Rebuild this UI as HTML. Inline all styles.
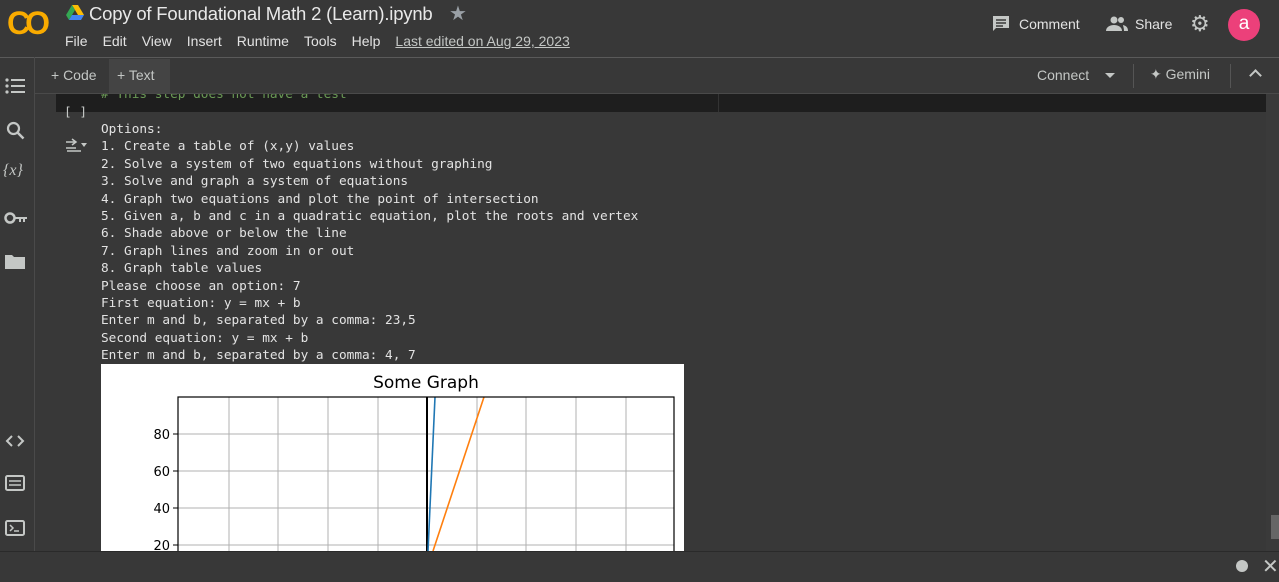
<!DOCTYPE html><html><head><style>
body{margin:0;width:1279px;height:581px;background:#383838;font-family:"Liberation Sans",sans-serif;color:#e3e3e3;overflow:hidden;position:relative}
.a{position:absolute}
.menu span{margin-right:15px}
pre{margin:0;font-family:"DejaVu Sans Mono","Liberation Mono",monospace;font-size:12.75px;line-height:17.4px;color:#e3e3e3}
.ic{fill:#c4c7c5}
</style></head><body>
<div class="a" style="left:7px;top:5px;font:bold 32px 'Liberation Sans';color:#f9ab00;letter-spacing:-5px">CO</div>
<svg class="a" style="left:66px;top:5px" width="18" height="16" viewBox="0 0 18 16"><path d="M6 0h6l6 10h-6z" fill="#fbbc04"/><path d="M6 0L0 10l3 5 6-10z" fill="#34a853"/><path d="M3 15h12l3-5H6z" fill="#4285f4"/></svg>
<div class="a" style="left:89px;top:3px;font-size:18.5px;color:#e8e8e8;letter-spacing:-0.2px">Copy of Foundational Math 2 (Learn).ipynb</div>
<div class="a" style="left:449px;top:1px;font-size:20px;color:#9aa0a6">★</div>
<div class="a menu" style="left:65px;top:33px;font-size:14px"><span>File</span><span>Edit</span><span>View</span><span>Insert</span><span>Runtime</span><span>Tools</span><span>Help</span><span style="text-decoration:underline;color:#c4c7c5">Last edited on Aug 29, 2023</span></div>
<svg class="a" style="left:992px;top:15px" width="18" height="18" viewBox="0 0 18 18"><path d="M1 1h16v12H4l-3 3z" fill="#c4c7c5"/><path d="M4 5h10M4 8h10M4 11h7" stroke="#383838" stroke-width="1.4"/></svg>
<div class="a" style="left:1019px;top:16px;font-size:14px">Comment</div>
<svg class="a" style="left:1106px;top:16px" width="22" height="16" viewBox="0 0 22 16"><circle cx="8" cy="4" r="3.5" class="ic"/><path d="M0 15c0-4 4-6 8-6s8 2 8 6z" class="ic"/><circle cx="15" cy="4" r="3" class="ic"/><path d="M17 9c3 1 5 2 5 6h-4c0-3-1-5-1-6z" class="ic"/></svg>
<div class="a" style="left:1135px;top:16px;font-size:14px">Share</div>
<div class="a" style="left:1190px;top:11px;font-size:22px;color:#c4c7c5">⚙</div>
<div class="a" style="left:1228px;top:9px;width:32px;height:32px;border-radius:50%;background:#ec407a;color:#fff;font-size:19px;text-align:center;line-height:30px">a</div>
<div class="a" style="left:0;top:57px;width:1279px;height:1px;background:#5a5a5a"></div>
<div class="a" style="left:34px;top:57px;width:1px;height:494px;background:#4a4a4a"></div>
<div class="a" style="left:35px;top:93px;width:1244px;height:1px;background:#4a4a4a"></div>
<div class="a" style="left:51px;top:67px;font-size:14px;color:#c4c7c5">+ Code</div>
<div class="a" style="left:109px;top:59px;width:61px;height:34px;background:#444"></div>
<div class="a" style="left:117px;top:67px;font-size:14px;color:#c4c7c5">+ Text</div>
<div class="a" style="left:1037px;top:67px;font-size:14px;color:#c4c7c5">Connect</div>
<div class="a" style="left:1105px;top:73px;border:5px solid transparent;border-top-color:#c4c7c5"></div>
<div class="a" style="left:1133px;top:64px;width:1px;height:24px;background:#555"></div>
<div class="a" style="left:1150px;top:66px;font-size:14px;color:#c4c7c5">✦ Gemini</div>
<div class="a" style="left:1230px;top:64px;width:1px;height:24px;background:#555"></div>
<div class="a" style="left:1251px;top:71px;width:7px;height:7px;border-left:2px solid #c4c7c5;border-top:2px solid #c4c7c5;transform:rotate(45deg)"></div>
<svg class="a" style="left:5px;top:78px" width="20" height="16" viewBox="0 0 20 16"><circle cx="2" cy="2" r="1.6" class="ic"/><circle cx="2" cy="8" r="1.6" class="ic"/><circle cx="2" cy="14" r="1.6" class="ic"/><path d="M6 2h14M6 8h14M6 14h14" stroke="#c4c7c5" stroke-width="2"/></svg>
<svg class="a" style="left:6px;top:121px" width="20" height="20" viewBox="0 0 20 20"><circle cx="7.5" cy="7.5" r="5.5" fill="none" stroke="#c4c7c5" stroke-width="2.2"/><path d="M11.5 11.5l6 6" stroke="#c4c7c5" stroke-width="2.5"/></svg>
<div class="a" style="left:3px;top:162px;font:italic 16px 'Liberation Serif';color:#c4c7c5">{x}</div>
<svg class="a" style="left:4px;top:211px" width="24" height="14" viewBox="0 0 24 14"><circle cx="6" cy="7" r="4.5" fill="none" stroke="#c4c7c5" stroke-width="2.5"/><path d="M10 6h13v2h-2v3h-2V8h-2v3h-2V8h-5z" class="ic"/></svg>
<svg class="a" style="left:5px;top:253px" width="20" height="16" viewBox="0 0 20 16"><path d="M0 2h7l2 2h11v12H0z" class="ic"/></svg>
<svg class="a" style="left:5px;top:434px" width="20" height="14" viewBox="0 0 20 14"><path d="M7 2L2 7l5 5M13 2l5 5-5 5" stroke="#c4c7c5" stroke-width="2" fill="none"/></svg>
<svg class="a" style="left:5px;top:475px" width="20" height="16" viewBox="0 0 20 16"><rect x="1" y="1" width="18" height="14" rx="1.5" fill="none" stroke="#c4c7c5" stroke-width="2"/><path d="M4 6h12M4 10h12" stroke="#c4c7c5" stroke-width="1.5"/></svg>
<svg class="a" style="left:5px;top:520px" width="20" height="16" viewBox="0 0 20 16"><rect x="1" y="1" width="18" height="14" rx="1.5" fill="none" stroke="#c4c7c5" stroke-width="2"/><path d="M5 5l3 3-3 3M9 11h5" stroke="#c4c7c5" stroke-width="1.5" fill="none"/></svg>
<div class="a" style="left:56px;top:94px;width:1210px;height:18px;background:#1e1e1e"></div>
<div class="a" style="left:718px;top:94px;width:1px;height:18px;background:#333"></div>
<div class="a" style="left:101px;top:94px;height:6px;overflow:hidden;width:400px"><pre style="color:#6a9955;margin-top:-8px"># This step does not have a test</pre></div>
<div class="a" style="left:1266px;top:94px;width:13px;height:457px;background:#3a3a3a"></div>
<div class="a" style="left:1271px;top:515px;width:8px;height:24px;background:#666"></div>
<pre class="a" style="left:64px;top:104px;color:#c4c7c5">[ ]</pre>
<svg class="a" style="left:66px;top:138px" width="22" height="14" viewBox="0 0 22 14"><path d="M0 4h10M0 10h10M6 1l4 3-4 3M1 13h14" stroke="#c4c7c5" stroke-width="1.5" fill="none"/><path d="M15 5h6l-3 4z" class="ic"/></svg>
<pre class="a" style="left:101px;top:121px">Options:
1. Create a table of (x,y) values
2. Solve a system of two equations without graphing
3. Solve and graph a system of equations
4. Graph two equations and plot the point of intersection
5. Given a, b and c in a quadratic equation, plot the roots and vertex
6. Shade above or below the line
7. Graph lines and zoom in or out
8. Graph table values
Please choose an option: 7
First equation: y = mx + b
Enter m and b, separated by a comma: 23,5
Second equation: y = mx + b
Enter m and b, separated by a comma: 4, 7</pre>
<svg class="a" style="left:101px;top:364px" width="583" height="187" viewBox="0 0 583 187">
<rect width="583" height="187" fill="#fff"/>
<text x="325" y="24" font-family="DejaVu Sans" font-size="17" text-anchor="middle" fill="#000">Some Graph</text>
<g stroke="#b0b0b0" stroke-width="1">
<path d="M128 33v160M177 33v160M227 33v160M277 33v160M376 33v160M425 33v160M475 33v160M525 33v160"/>
<path d="M77 70h496M77 107h496M77 144h496M77 181h496"/></g>
<path d="M72 70h5M72 107h5M72 144h5M72 181h5" stroke="#000"/>
<g font-family="DejaVu Sans" font-size="13" fill="#000" text-anchor="end"><text x="69" y="75">80</text><text x="69" y="112">60</text><text x="69" y="149">40</text><text x="69" y="186">20</text></g>
<path d="M326 33v160" stroke="#000" stroke-width="2"/>
<path d="M327 187L334 33" stroke="#1f77b4" stroke-width="1.6"/>
<path d="M332 187L383 33" stroke="#ff7f0e" stroke-width="1.6"/>
<rect x="77" y="33" width="496" height="160" fill="none" stroke="#000" stroke-width="1.2"/>
</svg>
<div class="a" style="left:0;top:551px;width:1279px;height:30px;background:#383838;border-top:1px solid #2a2a2a"></div>
<div class="a" style="left:1236px;top:560px;width:12px;height:12px;border-radius:50%;background:#c4c7c5"></div>
<div class="a" style="left:1262px;top:554px;font-size:20px;color:#c4c7c5">✕</div>
</body></html>
